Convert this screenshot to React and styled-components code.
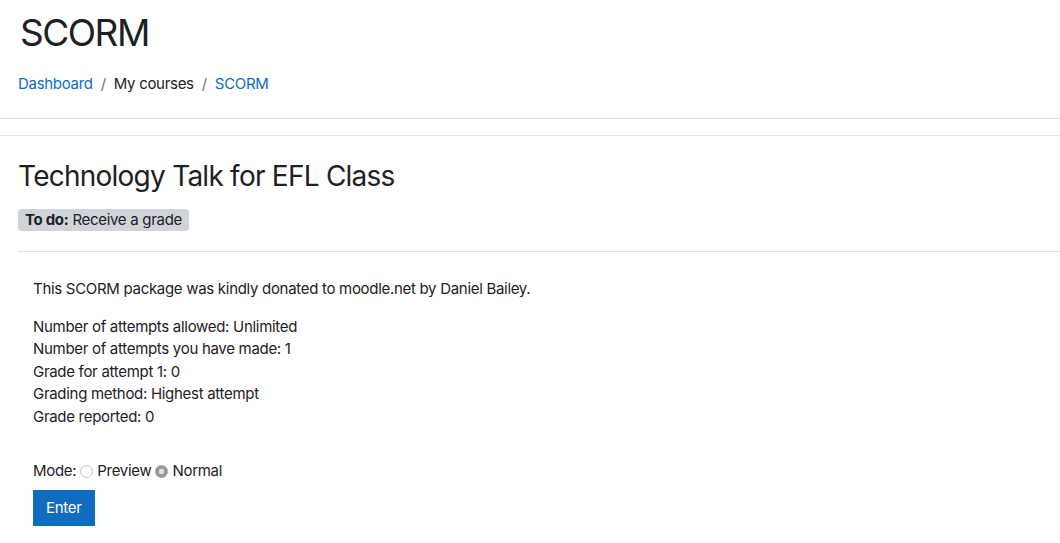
import React, { useState } from "react";
import styled, { createGlobalStyle } from "styled-components";

const GlobalStyle = createGlobalStyle`
  body {
    margin: 0;
    background: #fff;
    color: #1d2125;
    font-family: Inter, "Noto Sans", sans-serif;
    font-size: 15px;
    line-height: 1.5;
    letter-spacing: -0.02em;
  }
`;

const PageHeader = styled.header`
  padding: 11px 18px 0 18px;
  height: 119px;
  box-sizing: border-box;
  border-bottom: 1px solid #dee2e6;
`;

const PageTitle = styled.h1`
  margin: 0 0 0 2px;
  font-size: 37px;
  font-weight: 400;
  line-height: 1.2;
  letter-spacing: -0.04em;
`;

const Crumbs = styled.nav`
  display: flex;
  align-items: center;
  margin-top: 18px;
`;

const Crumb = styled.a`
  color: ${(p) => (p.plain ? "#1d2125" : "#0f6cbf")};
  text-decoration: none;
`;

const Sep = styled.span`
  color: #6a737b;
  padding: 0 8px;
`;

const Main = styled.main`
  margin-top: 16px;
  border-top: 1px solid #dee2e6;
  padding: 24px 0 0 18px;
`;

const ActivityTitle = styled.h2`
  margin: 0;
  font-size: 28px;
  font-weight: 400;
  line-height: 1.2;
  letter-spacing: -0.027em;
`;

const Badge = styled.span`
  display: inline-block;
  margin-top: 15px;
  padding: 0 7px;
  height: 22px;
  line-height: 22px;
  border-radius: 4px;
  background: #ced4da;
  font-size: 15px;
  b {
    font-weight: 700;
  }
`;

const Intro = styled.section`
  margin-top: 20px;
  border-top: 1px solid #dee2e6;
  padding: 26px 15px 0 15px;
`;

const Para = styled.p`
  margin: 0 0 15px 0;
`;

const ModeRow = styled.div`
  display: flex;
  align-items: center;
  margin-top: 32px;
`;

const RadioLabel = styled.label`
  display: flex;
  align-items: center;
  margin-left: 4px;
`;

const RadioDot = styled.span`
  width: 13px;
  height: 13px;
  border-radius: 50%;
  box-sizing: border-box;
  margin-right: 4px;
  border: 1.5px solid ${(p) => (p.checked ? "#999" : "#c2c2c2")};
  background: ${(p) =>
    p.checked
      ? "radial-gradient(circle, #e2e2e2 0 2.5px, #9a9a9a 3px)"
      : "#fff"};
`;

const EnterButton = styled.button`
  margin-top: 7px;
  background: #0f6cbf;
  color: #fff;
  border: 0;
  border-radius: 0;
  font-family: inherit;
  letter-spacing: inherit;
  font-size: 15px;
  height: 36px;
  padding: 0 13px;
`;

export default function App() {
  const [mode, setMode] = useState("normal");
  return (
    <>
      <GlobalStyle />
      <PageHeader>
        <PageTitle>SCORM</PageTitle>
        <Crumbs>
          <Crumb href="#">Dashboard</Crumb>
          <Sep>/</Sep>
          <Crumb plain>My courses</Crumb>
          <Sep>/</Sep>
          <Crumb href="#">SCORM</Crumb>
        </Crumbs>
      </PageHeader>
      <Main>
        <ActivityTitle>Technology Talk for EFL Class</ActivityTitle>
        <Badge>
          <b>To do:</b> Receive a grade
        </Badge>
        <Intro>
          <Para>This SCORM package was kindly donated to moodle.net by Daniel Bailey.</Para>
          <div>Number of attempts allowed: Unlimited</div>
          <div>Number of attempts you have made: 1</div>
          <div>Grade for attempt 1: 0</div>
          <div>Grading method: Highest attempt</div>
          <div>Grade reported: 0</div>
          <ModeRow>
            Mode:
            <RadioLabel onClick={() => setMode("preview")}>
              <RadioDot checked={mode === "preview"} />
              Preview
            </RadioLabel>
            <RadioLabel onClick={() => setMode("normal")}>
              <RadioDot checked={mode === "normal"} />
              Normal
            </RadioLabel>
          </ModeRow>
          <EnterButton>Enter</EnterButton>
        </Intro>
      </Main>
    </>
  );
}
